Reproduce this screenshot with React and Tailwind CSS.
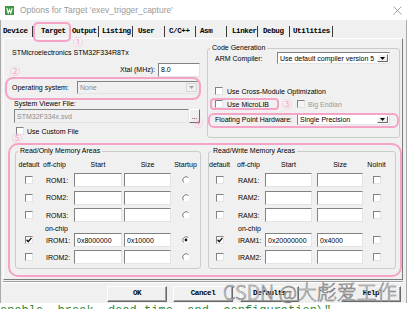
import React from 'react';

const sunken = 'border border-t-[#828282] border-l-[#828282] border-r-[#e4e4e4] border-b-[#e4e4e4]';
const raised = 'border border-t-white border-l-white border-r-[#6a6a6a] border-b-[#6a6a6a]';

const Check = ({ on, off }) => (
  <span className={`flex items-center justify-center w-[8px] h-[8px] shrink-0 ${sunken} ${off ? 'bg-[#f4f4f4]' : 'bg-white'}`}>
    {on && (
      <svg width="6" height="6" viewBox="0 0 6 6">
        <path d="M0.6 2.8 L2.2 4.6 L5.4 0.9" fill="none" stroke="#111" strokeWidth="1.4" />
      </svg>
    )}
  </span>
);

const Radio = ({ on }) => (
  <svg width="8" height="8" viewBox="0 0 8 8">
    <circle cx="4" cy="4" r="3.4" fill="#fff" />
    <path d="M6.4 1.6 A3.4 3.4 0 0 0 1.6 6.4" fill="none" stroke="#7a7a7a" strokeWidth="1" />
    {on && <circle cx="4" cy="4" r="1.4" fill="#111" />}
  </svg>
);

const Field = ({ value, className, off }) => (
  <div className={`h-[14px] flex items-center pl-[2px] whitespace-nowrap ${sunken} ${off ? 'bg-[#f0f0f0] text-[#8d8d8d]' : 'bg-white'} ${className}`}>
    {value}
  </div>
);

const Drop = ({ value, off, className }) => (
  <div className={`flex items-stretch ${sunken} ${off ? 'bg-[#f0f0f0] text-[#8d8d8d]' : 'bg-white'} ${className}`}>
    <span className="flex-1 flex items-center pl-[2px] whitespace-nowrap overflow-hidden">{value}</span>
    <span className={`w-[11px] m-[1px] flex items-center justify-center bg-[#f0f0f0] ${off ? 'border border-[#d6d6d6]' : raised}`}>
      <svg width="5" height="3" viewBox="0 0 5 3">
        <path d="M0 0 H5 L2.5 3 Z" fill={off ? '#a6a6a6' : '#000'} />
      </svg>
    </span>
  </div>
);

const Group = ({ title, className, children }) => (
  <fieldset className={`border border-[#cbcbcb] rounded-[3px] ${className}`}>
    <legend className="ml-[2px] px-[2px] h-[8px] leading-[8px]">{title}</legend>
    {children}
  </fieldset>
);

const tabs = [
  ['Device', 'w-[31px] pl-[1px]'],
  ['Target', 'w-[37px] pl-[8px]'],
  ['Output', 'w-[29px] pl-[2px]'],
  ['Listing', 'w-[34px] pl-[3px]'],
  ['User', 'w-[32px] pl-[5px]'],
  ['C/C++', 'w-[31px] pl-[4px]'],
  ['Asm', 'w-[31px] pl-[4px]'],
  ['Linker', 'w-[31px] pl-[5px]'],
  ['Debug', 'w-[32px] pl-[5px]'],
  ['Utilities', 'w-[43px] pl-[3px]'],
];

const romRows = [
  { name: 'ROM1:' },
  { name: 'ROM2:', cls: 'mt-[3.5px]' },
  { name: 'ROM3:', cls: 'mt-[3.5px]' },
];

const ramRows = [
  { name: 'RAM1:' },
  { name: 'RAM2:', cls: 'mt-[3.5px]' },
  { name: 'RAM3:', cls: 'mt-[3.5px]' },
];

const mono = "font-['Liberation_Mono',monospace] font-bold text-[7.5px] tracking-[-0.4px]";

const RomRow = ({ name, cls = '', on, start = '', size = '', startup }) => (
  <div className={`flex items-center h-[14px] ${cls}`}>
    <div className="w-[26px] flex justify-center"><Check on={on} /></div>
    <div className="w-[32px] pl-[4px]">{name}</div>
    <Field value={start} className="w-[48px]" />
    <Field value={size} className="w-[47px] ml-[2px]" />
    <div className="w-[29px] flex justify-center"><Radio on={startup} /></div>
  </div>
);

const RamRow = ({ name, cls = '', on, start = '', size = '' }) => (
  <div className={`flex items-center h-[14px] ${cls}`}>
    <div className="w-[21px] flex justify-center"><Check on={on} /></div>
    <div className="w-[35px] pl-[8px]">{name}</div>
    <Field value={start} className="w-[47px]" />
    <Field value={size} className="w-[46px] ml-[5px]" />
    <div className="w-[27px] flex justify-center"><Check /></div>
  </div>
);

const Btn = ({ label, className }) => (
  <div className={`h-[16px] flex items-center justify-center bg-[#f0f0f0] ${raised} shadow-[inset_-1px_-1px_0_#a0a0a0] ${mono} ${className}`}>
    {label}
  </div>
);

const Circ = ({ n, className }) => (
  <span className={`absolute text-[10px] leading-none text-[#f5a3c6] font-['Noto_Sans_CJK_SC',sans-serif] ${className}`}>{n}</span>
);

export default function App() {
  return (
    <div className="relative w-[410px] h-[309px] overflow-hidden bg-white text-[7px] leading-none text-black font-['Liberation_Sans',Arial,sans-serif]">
      {/* title bar */}
      <div className="h-[20px] flex items-center bg-white">
        <svg className="ml-[5px]" width="9" height="9" viewBox="0 0 9 9">
          <rect width="9" height="9" fill="#3d9640" />
          <path d="M1.8 2 L3.2 7 L4.5 3.6 L5.8 7 L7.2 2" fill="none" stroke="#fff" strokeWidth="1.1" />
        </svg>
        <span className="ml-[6px] text-[8.5px] text-[#9a9a9a]">Options for Target 'exev_trigger_capture'</span>
        <svg className="ml-auto mr-[8px]" width="9" height="9" viewBox="0 0 9 9">
          <path d="M0.5 0.5 L8.5 8.5 M8.5 0.5 L0.5 8.5" stroke="#8a8a8a" strokeWidth="0.8" />
        </svg>
      </div>

      {/* dialog body */}
      <div className="w-[407px] h-[283px] bg-[#f0f0f0] border-l border-r border-[#a9a9a9] flex flex-col">
        {/* tabs */}
        <div className={`h-[18px] pl-[1px] flex items-end ${mono}`}>
          {tabs.map(([t, w]) => (
            <div key={t} className={`h-[11px] mb-[1px] flex items-center border-r border-[#3c3c3c] ${w}`}>{t}</div>
          ))}
        </div>

        {/* tab panel */}
        <div className="ml-[2px] w-[400px] h-[242px] border border-t-white border-l-white border-r-[#7c7c7c] border-b-[#7c7c7c] flex flex-col">
          <div className="flex">
            {/* left column */}
            <div className="w-[198px] pl-[8px] pr-[2px] pt-[7px] flex flex-col">
              <div className="h-[12px] flex items-center">STMicroelectronics STM32F334R8Tx</div>
              <div className="h-[13px] mt-[5px] flex items-center justify-end">
                <span className="mr-[3px]">Xtal (MHz):</span>
                <Field value="8.0" className="w-[42px] h-[13px]" />
              </div>
              <div className="h-[13px] mt-[5px] flex items-center">
                <span className="w-[65px]">Operating system:</span>
                <Drop value="None" off className="w-[122px] h-[13px]" />
              </div>
              <div className="h-[8px] mt-[5px] ml-[2px] flex items-center">System Viewer File:</div>
              <div className="h-[14px] mt-[2px] ml-[2px] flex items-center">
                <Field value="STM32F334x.svd" off className="w-[177px]" />
                <div className={`w-[11px] h-[14px] flex items-center justify-center bg-[#f0f0f0] ${raised}`}>...</div>
              </div>
              <div className="h-[10px] mt-[3px] ml-[4px] flex items-center gap-[3px]">
                <Check />
                <span>Use Custom File</span>
              </div>
            </div>

            {/* code generation */}
            <Group title="Code Generation" className="ml-[5px] mt-[5px] w-[193px] h-[94px]">
              <div className="h-[12px] pl-[7px] flex items-center">
                <span className="w-[62px]">ARM Compiler:</span>
                <Drop value="Use default compiler version 5" className="w-[113px] h-[12px]" />
              </div>
              <div className="h-[10px] mt-[22px] pl-[7px] flex items-center gap-[4px]">
                <Check />
                <span>Use Cross-Module Optimization</span>
              </div>
              <div className="h-[10px] mt-[3px] pl-[7px] flex items-center">
                <div className="w-[82px] flex items-center gap-[4px]">
                  <Check />
                  <span>Use MicroLIB</span>
                </div>
                <Check off />
                <span className="ml-[3px] text-[#9a9a9a]">Big Endian</span>
              </div>
              <div className="h-[11px] mt-[5px] pl-[7px] flex items-center">
                <span className="w-[82px]">Floating Point Hardware:</span>
                <Drop value="Single Precision" className="w-[93px] h-[11px]" />
              </div>
            </Group>
          </div>

          {/* memory areas */}
          <div className="flex mt-[9px]">
            <Group title="Read/Only Memory Areas" className="ml-[11px] w-[186px] h-[122px]">
              <div className="h-[8px] mt-[5px] flex items-center">
                <span className="w-[26px] text-center">default</span>
                <span className="w-[32px] pl-[1px]">off-chip</span>
                <span className="w-[48px] text-center">Start</span>
                <span className="w-[2px]" />
                <span className="w-[47px] text-center">Size</span>
                <span className="w-[29px] text-center">Startup</span>
              </div>
              <div className="mt-[5px]">
                {romRows.map((r) => <RomRow key={r.name} {...r} />)}
              </div>
              <div className="h-[8px] mt-[2px] pl-[29px] flex items-center">on-chip</div>
              <RomRow name="IROM1:" cls="mt-[1px]" on start="0x8000000" size="0x10000" startup />
              <RomRow name="IROM2:" cls="mt-[3px]" />
            </Group>

            <Group title="Read/Write Memory Areas" className="ml-[7px] w-[188px] h-[122px]">
              <div className="h-[8px] mt-[5px] flex items-center">
                <span className="w-[21px] text-center">default</span>
                <span className="w-[35px] pl-[7px]">off-chip</span>
                <span className="w-[47px] text-center">Start</span>
                <span className="w-[5px]" />
                <span className="w-[46px] text-center">Size</span>
                <span className="w-[27px] text-center">NoInit</span>
              </div>
              <div className="mt-[5px]">
                {ramRows.map((r) => <RamRow key={r.name} {...r} />)}
              </div>
              <div className="h-[8px] mt-[2px] pl-[29px] flex items-center">on-chip</div>
              <RamRow name="IRAM1:" cls="mt-[1px]" on start="0x20000000" size="0x4000" />
              <RamRow name="IRAM2:" cls="mt-[3px]" />
            </Group>
          </div>
        </div>

        {/* separator + buttons */}
        <div className="ml-[2px] w-[400px] h-[2px] mt-[1px] border-t border-t-[#a0a0a0] border-b border-b-white" />
        <div className="flex mt-[3px] pl-[106px]">
          <Btn label="OK" className="w-[60px]" />
          <Btn label="Cancel" className="w-[60px] ml-[6px]" />
          <Btn label="Defaults" className="w-[59px] ml-[7px]" />
          <Btn label="Help" className="w-[60px] ml-[42px]" />
        </div>
      </div>

      {/* editor text behind the dialog */}
      <div className="h-[6px] overflow-hidden bg-white">
        <div className="pt-[2px] text-[12px] leading-[12px] whitespace-pre text-[#2f8a3a] font-['Liberation_Mono',monospace]">
          {'enable  break  dead time  and  configuration\\"'}
        </div>
      </div>

      {/* annotations */}
      <div className="absolute left-[33px] top-[22px] w-[38px] h-[20px] border-2 border-[#f5a3c6] rounded-[5px]" />
      <div className="absolute left-[5px] top-[77px] w-[196px] h-[23px] border-2 border-[#f5a3c6] rounded-[8px]" />
      <div className="absolute left-[210px] top-[98px] w-[69px] h-[12px] border-2 border-[#f5a3c6] rounded-[4px]" />
      <div className="absolute left-[208px] top-[113px] w-[191px] h-[15px] border-2 border-[#f5a3c6] rounded-[6px]" />
      <div className="absolute left-[8px] top-[143px] w-[394px] h-[134px] border-2 border-[#f5a3c6] rounded-[10px]" />
      <Circ n="①" className="left-[73px] top-[37px]" />
      <Circ n="②" className="left-[10px] top-[66px]" />
      <Circ n="③" className="left-[282px] top-[99px]" />
      <Circ n="④" className="left-[193px] top-[118px]" />
      <Circ n="⑤" className="left-[12px] top-[133px]" />

      {/* watermark */}
      <div className="absolute left-[223px] top-[282px] text-[20px] leading-none font-light whitespace-nowrap text-white/80 [-webkit-text-stroke:0.6px_#7a7a7a] font-['Noto_Sans_CJK_SC',sans-serif]">
        CSDN @大彪爱工作
      </div>
    </div>
  );
}
